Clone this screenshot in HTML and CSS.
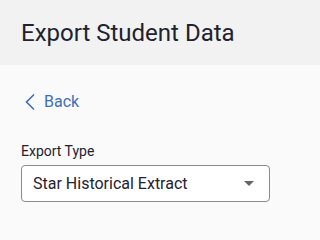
FILE: index.html
```html
<!DOCTYPE html>
<html>
<head>
<meta charset="utf-8">
<link rel="stylesheet" href="styles.css">
</head>
<body>
<header class="header">
  <h1 class="title">Export Student Data</h1>
</header>
<main class="content">
  <a class="back" href="#">
    <svg class="chev" width="12" height="18" viewBox="0 0 12 18"><path d="M10 1.5 L2.5 9 L10 16.5" fill="none" stroke="#3f6fb8" stroke-width="1.6"/></svg>
    <span>Back</span>
  </a>
  <div class="field">
    <label class="label">Export Type</label>
    <div class="select">
      <span class="value">Star Historical Extract</span>
      <span class="arrow"></span>
    </div>
  </div>
</main>
</body>
</html>
```
FILE: styles.css
```css
html {
  background: #fafafa;
}
html, body { margin: 0; padding: 0; }
body {
  font-family: Roboto, "Liberation Sans", sans-serif;
  color: #1f2230;
}
.header {
  background: #f2f2f2;
  height: 65px;
  display: flex;
  align-items: center;
  padding-left: 21px;
}
.title {
  margin: 0;
  font-size: 24px;
  font-weight: 400;
  color: #1f2230;
  line-height: 28px;
}
.content {
  padding: 27px 21px 0 21px;
}
.back {
  display: flex;
  align-items: center;
  gap: 8px;
  color: #3f6fb8;
  text-decoration: none;
  font-size: 16px;
  line-height: 20px;
  padding-left: 3px;
}
.field {
  margin-top: 31px;
}
.label {
  display: block;
  font-size: 14px;
  line-height: 16px;
  color: #1f2230;
}
.select {
  margin-top: 6px;
  width: 249px;
  height: 37px;
  box-sizing: border-box;
  border: 1px solid #8a8a8a;
  border-radius: 4px;
  background: #fff;
  display: flex;
  align-items: center;
  justify-content: space-between;
  padding: 0 15px 0 11px;
}
.value {
  font-size: 16px;
  color: #1f2230;
}
.arrow {
  width: 0;
  height: 0;
  border-left: 5px solid transparent;
  border-right: 5px solid transparent;
  border-top: 5px solid #666;
}
```
